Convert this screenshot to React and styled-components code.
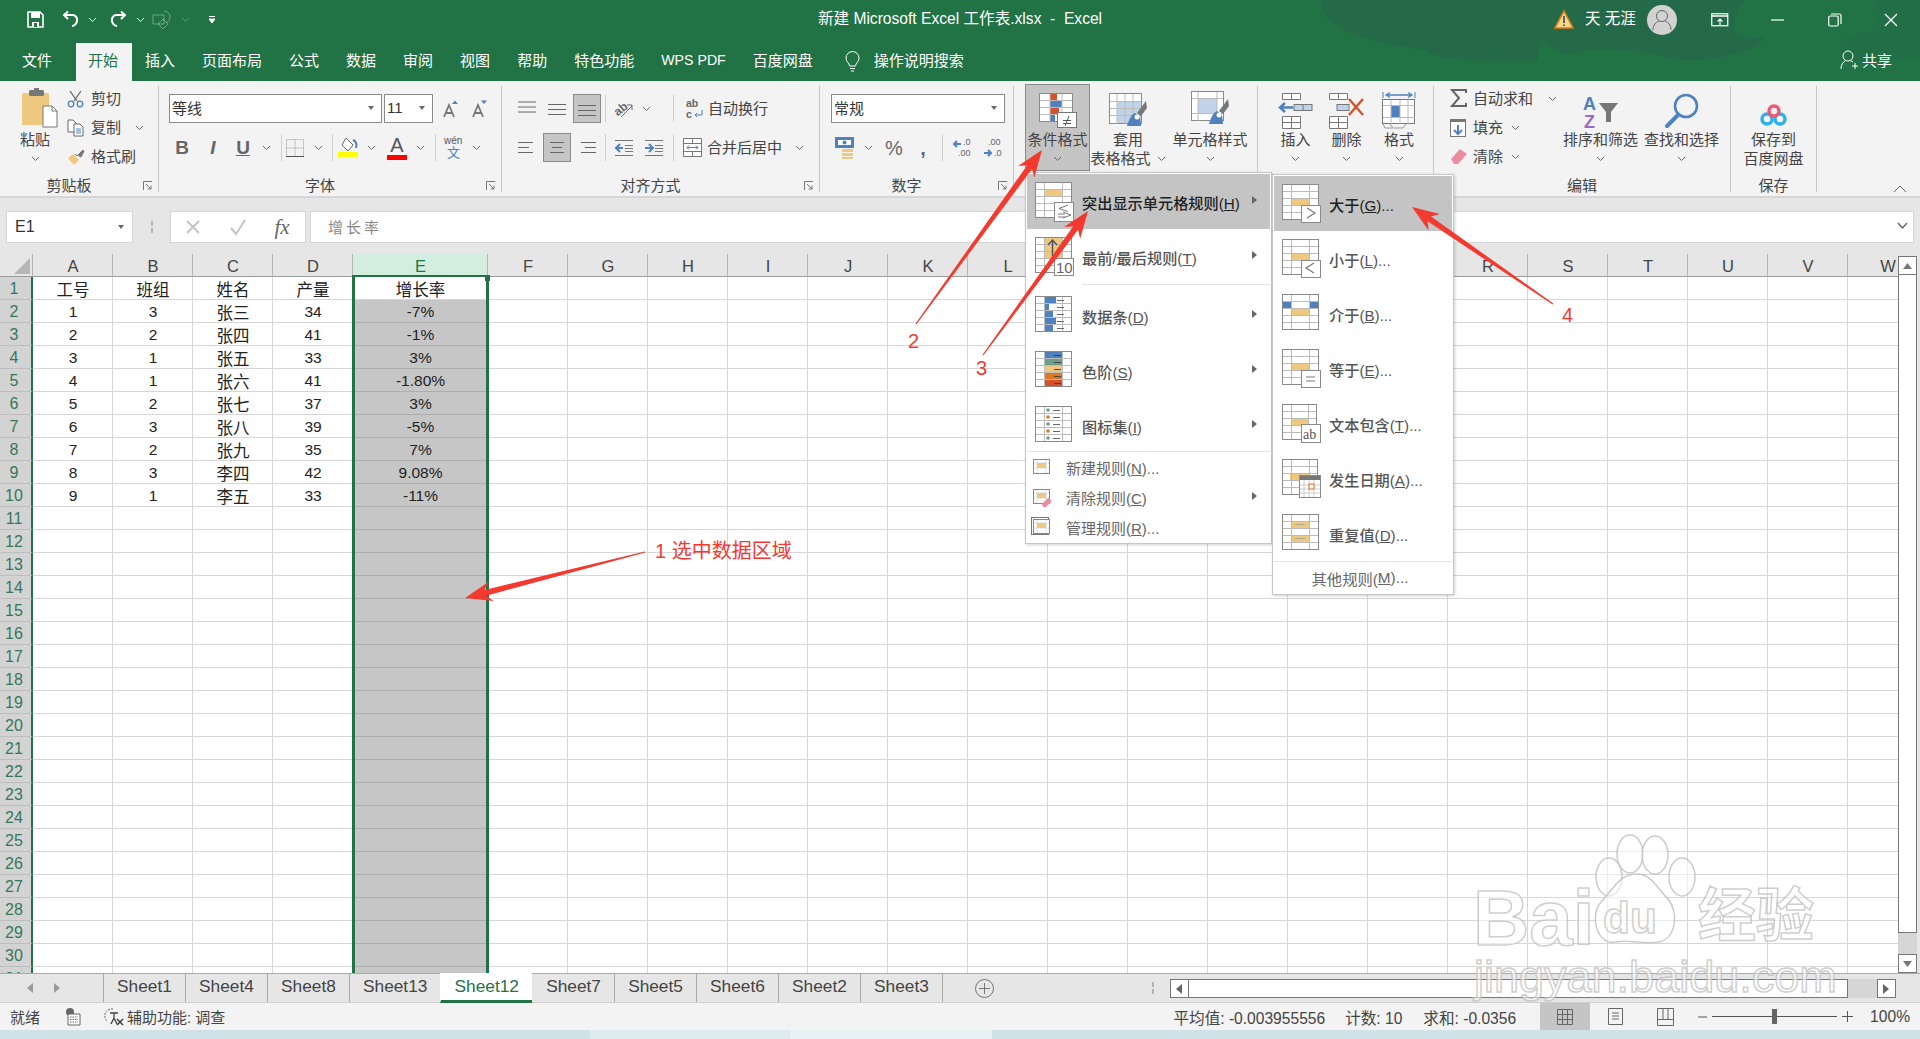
import React from "react";
import styled, { createGlobalStyle } from "styled-components";

const FONT = `"Liberation Sans", "Noto Sans CJK SC", sans-serif`;
const GREEN = "#217346";
const BLUE = "#4e81bd";
const GOLD = "#edc87e";

const GlobalStyle = createGlobalStyle`
  html, body { margin: 0; padding: 0; background: #fff; overflow: hidden; }
  * { box-sizing: border-box; }
  svg { overflow: visible; }
`;

const Page = styled.div`
  position: relative;
  width: 1920px;
  height: 1039px;
  display: flex;
  flex-direction: column;
  overflow: hidden;
  font-family: ${FONT};
  color: #444;
  font-size: 15px;
`;

/* ---------- title + tabs ---------- */
const Header = styled.header`
  position: relative;
  height: 81px;
  flex: none;
  background: ${GREEN};
  color: #fff;
`;
const Blobs = styled.svg`
  position: absolute;
  inset: 0;
`;
const TitleBar = styled.div`
  position: relative;
  height: 43px;
  display: grid;
  grid-template-columns: 1fr auto 1fr;
  align-items: center;
  padding-bottom: 4px;
`;
const Row = styled.div`
  display: flex;
  align-items: center;
  height: ${(p) => p.$h || 29}px;
  padding-left: ${(p) => p.$pl || 0}px;
  justify-content: ${(p) => p.$end ? "flex-end" : "flex-start"};
`;
const Title = styled.div`
  font-size: 15.6px;
  white-space: pre;
  margin-bottom: 5px;
`;
const Cell = styled.span`
  display: flex;
  align-items: center;
  justify-content: center;
  flex: none;
  width: ${(p) => p.$w}px;
  margin-left: ${(p) => p.$ml || 0}px;
`;
const Avatar = styled.span`
  display: flex;
  align-items: center;
  justify-content: center;
  width: 30px;
  height: 30px;
  margin-left: 13px;
  border-radius: 50%;
  background: #d2d2d2;
  flex: none;
`;
const UserName = styled.span`
  margin-left: 11px;
  margin-bottom: 5px;
  width: 49px;
  font-size: 15.5px;
  white-space: pre;
`;
const Tabs = styled.nav`
  position: relative;
  height: 38px;
  display: flex;
  align-items: stretch;
  padding-left: 8.5px;
`;
const Tab = styled.div`
  display: flex;
  align-items: center;
  padding: 0 13.5px 5px;
  margin-right: ${(p) => p.$mr || 0}px;
  font-size: ${(p) => p.$size || 15}px;
  color: ${(p) => (p.$active ? GREEN : "#fff")};
  background: ${(p) => (p.$active ? "#f3f3f3" : "transparent")};
  ${(p) => p.$active && "padding-left: 12px;"}
`;
const Share = styled.div`
  margin-left: auto;
  padding: 0 28px 5px 0;
  display: flex;
  align-items: center;
  gap: 4px;
  font-size: 15px;
`;

/* ---------- ribbon ---------- */
const Ribbon = styled.section`
  height: 117px;
  flex: none;
  display: flex;
  padding-top: 5px;
  background: #f3f3f3;
  border-bottom: 2px solid #d6d6d6;
`;
const Group = styled.div`
  position: relative;
  flex: none;
  width: ${(p) => p.$w}px;
  height: 106px;
  border-right: 1px solid #c6c6c6;
`;
const GroupBody = styled.div`
  height: 91px;
  display: flex;
  padding-left: ${(p) => p.$pl || 0}px;
  gap: ${(p) => p.$gap || 0}px;
`;
const GroupLabel = styled.div`
  height: 15px;
  line-height: 18px;
  text-align: center;
  font-size: 15px;
  padding-right: ${(p) => (p.$launcher ? 20 : 0)}px;
`;
const Launcher = styled.svg`
  position: absolute;
  right: 5px;
  bottom: 1px;
`;
const Controls = styled.div`
  display: flex;
  flex-direction: column;
  gap: 10px;
  padding-top: 8px;
`;
const Small = styled.div`
  display: flex;
  flex-direction: column;
  width: ${(p) => p.$w}px;
  margin-top: -2px;
`;
const SmallRow = styled.div`
  height: 29px;
  display: flex;
  align-items: center;
  white-space: nowrap;
`;
const SmallLabel = styled.span`
  margin-left: ${(p) => p.$ml || 7}px;
  margin-right: ${(p) => p.$mr || 0}px;
  padding-bottom: 2px;
  font-size: 15px;
`;
const Big = styled.div`
  flex: none;
  width: ${(p) => p.$w}px;
  height: 87px;
  margin-top: -2px;
  padding-top: 8px;
  display: flex;
  flex-direction: column;
  align-items: center;
  font-size: 15px;
  line-height: 19px;
  white-space: nowrap;
  background: ${(p) => (p.$pressed ? "#c5c5c5" : "transparent")};
  outline: ${(p) => (p.$pressed ? "1px solid #8a8a8a" : "none")};
  outline-offset: -1px;
`;
const BigIcon = styled.div`
  height: 38px;
  flex: none;
  display: flex;
  align-items: flex-end;
  justify-content: center;
  padding-bottom: 1px;
`;
const BigLine = styled.div`
  height: 19px;
  display: flex;
  align-items: center;
  gap: 6px;
`;
const Select = styled.div`
  flex: none;
  width: ${(p) => p.$w}px;
  margin-left: ${(p) => p.$ml || 0}px;
  height: 29px;
  display: flex;
  align-items: center;
  justify-content: space-between;
  padding: 0 7px 2px 2px;
  background: #fff;
  border: 1px solid #8a8a8a;
  font-size: 15px;
  color: #333;
`;
const Caret = styled.i`
  width: 0;
  height: 0;
  border-left: 3.5px solid transparent;
  border-right: 3.5px solid transparent;
  border-top: 4px solid #666;
`;
const Sep = styled.span`
  flex: none;
  width: 1px;
  height: 27px;
  background: #cfcfcf;
  margin-left: ${(p) => p.$ml || 0}px;
`;
const Toggled = styled.span`
  flex: none;
  display: flex;
  align-items: center;
  justify-content: center;
  width: 28px;
  height: 29px;
  margin-left: 1px;
  background: #c5c5c5;
  border: 1px solid #8a8a8a;
`;
const Glyph = styled.span`
  font-family: ${(p) => (p.$serif ? `"Liberation Serif", serif` : `"Liberation Sans", sans-serif`)};
  font-size: ${(p) => p.$size || 19}px;
  font-weight: ${(p) => p.$weight || 400};
  font-style: ${(p) => (p.$italic ? "italic" : "normal")};
  text-decoration: ${(p) => (p.$under ? "underline" : "none")};
  color: #666;
  line-height: 1;
`;
const ColorLetter = styled.span`
  display: flex;
  flex-direction: column;
  align-items: center;
  font-size: 20px;
  line-height: 19px;
  font-weight: 400;
  color: #555;
  &::after {
    content: "";
    width: 20px;
    height: 5px;
    background: #ff0000;
  }
`;
const RibbonEnd = styled.div`
  flex: 1;
  display: flex;
  justify-content: flex-end;
  align-items: flex-end;
  padding: 0 13px 3px 0;
`;

/* ---------- formula bar ---------- */
const FormulaBar = styled.div`
  height: 56px;
  flex: none;
  background: #e6e6e6;
  padding: 13px 6px 11px 6px;
  display: flex;
  align-items: stretch;
`;
const NameBox = styled.div`
  width: 127px;
  background: #fff;
  border: 1px solid #d5d5d5;
  display: flex;
  align-items: center;
  justify-content: space-between;
  padding: 0 8px;
  font-size: 16px;
  color: #333;
`;
const Dots = styled.span`
  width: 37px;
  display: flex;
  flex-direction: column;
  align-items: center;
  justify-content: center;
  gap: 2px;
  &::before, &::after {
    content: "";
    width: 2px;
    height: 5px;
    background: #b5b5b5;
  }
`;
const FxBox = styled.div`
  width: 136px;
  background: #fff;
  border: 1px solid #d5d5d5;
  display: flex;
  align-items: center;
`;
const FormulaInput = styled.div`
  flex: 1;
  margin-left: 4px;
  background: #fff;
  border: 1px solid #d5d5d5;
  display: flex;
  align-items: center;
  justify-content: space-between;
  padding: 0 5px 2px 17px;
  color: #888;
  font-size: 15px;
  letter-spacing: 3px;
`;

/* ---------- sheet ---------- */
const GridArea = styled.div`
  height: 719px;
  flex: none;
  display: flex;
  background: #e6e6e6;
  padding-right: 3px;
`;
const Sheet = styled.div`
  position: relative;
  flex: 1;
  overflow: hidden;
  background: #fff;
`;
const Table = styled.div`
  display: grid;
  grid-template-columns: 33px repeat(4, 80px) 135px repeat(18, 80px);
  grid-auto-rows: 23px;
  width: 1928px;
`;
const Corner = styled.div`
  background: #e6e6e6;
  border-bottom: 1px solid #9c9c9c;
  border-right: 1px solid #b4b4b4;
  display: flex;
  align-items: flex-end;
  justify-content: flex-end;
  padding: 0 2px 2px 0;
`;
const ColHead = styled.div`
  display: flex;
  align-items: center;
  justify-content: center;
  padding: 3px 0 0 1px;
  font-size: 16.5px;
  background: ${(p) => (p.$sel ? "#d3eedf" : "#e6e6e6")};
  color: ${(p) => (p.$sel ? GREEN : "#444")};
  border-bottom: 1px solid #9c9c9c;
  border-right: 1px solid #b4b4b4;
`;
const RowHead = styled.div`
  display: flex;
  align-items: center;
  justify-content: center;
  padding: 2px 3px 0 0;
  font-size: 16px;
  background: #d3d3d3;
  color: #34785a;
  border-bottom: 1px solid #bdbdbd;
  border-right: 2px solid ${GREEN};
`;
const DataCell = styled.div`
  display: flex;
  align-items: center;
  justify-content: center;
  padding: 2px 0 0 1px;
  font-size: ${(p) => (p.$cjk ? 16.5 : 15.5)}px;
  color: #222;
  white-space: nowrap;
  background: ${(p) => (p.$sel ? "#c6c6c6" : "#fff")};
  border-bottom: 1px solid ${(p) => (p.$sel ? "#adadad" : "#d6d6d6")};
  border-right: 1px solid ${(p) => (p.$sel ? "#c6c6c6" : "#d6d6d6")};
`;
const Selection = styled.div`
  position: absolute;
  left: 352px;
  top: 21px;
  width: 137px;
  height: 710px;
  border: 2px solid ${GREEN};
  border-width: 2px 3px 0;
  pointer-events: none;
  &::after {
    content: "";
    position: absolute;
    right: -4px;
    top: -2px;
    width: 5px;
    height: 6px;
    background: ${GREEN};
  }
`;
const VScroll = styled.div`
  flex: none;
  width: 19px;
  display: flex;
  flex-direction: column;
  padding-top: 2px;
`;
const ScrollBtn = styled.div`
  flex: none;
  width: ${(p) => (p.$wide ? "19px" : "100%")};
  height: ${(p) => p.$h || 19}px;
  display: flex;
  align-items: center;
  justify-content: center;
  background: #fff;
  border: 1px solid #777;
`;
const Thumb = styled.div`
  flex: none;
  height: 658px;
  background: #fff;
  border: 1px solid #777;
  border-top: none;
`;
const Track = styled.div`
  flex: 1;
  background: #d6d6d6;
`;

/* ---------- sheet tabs ---------- */
const SheetBar = styled.div`
  height: 30px;
  flex: none;
  display: flex;
  background: #e6e6e6;
  border-top: 1px solid #aaa;
  border-bottom: 1px solid #d0d0d0;
  align-items: stretch;
`;
const NavArrows = styled.div`
  width: 103px;
  display: flex;
  align-items: center;
  padding-left: 27px;
  gap: 21px;
`;
const SheetTab = styled.div`
  flex: none;
  display: flex;
  align-items: center;
  justify-content: center;
  padding: 0 13.1px ${(p) => (p.$active ? 1 : 4)}px;
  margin: ${(p) => (p.$active ? "-1px 0 -1px" : "0")};
  font-size: 17.3px;
  color: ${(p) => (p.$active ? GREEN : "#444")};
  background: ${(p) => (p.$active ? "#fff" : "transparent")};
  border-left: 1px solid ${(p) => (p.$active || p.$noline ? "transparent" : "#a8a8a8")};
  border-bottom: ${(p) => (p.$active ? `3px solid ${GREEN}` : "none")};
`;
const TabsEnd = styled.span`
  flex: none;
  width: 1px;
  background: #a8a8a8;
`;
const AddSheet = styled.div`
  width: 19px;
  height: 19px;
  margin: 5px 0 0 32px;
  border: 1px solid #777;
  border-radius: 50%;
  display: flex;
  align-items: center;
  justify-content: center;
  flex: none;
`;
const HScroll = styled.div`
  margin: 5px 0 0 0;
  height: 19px;
  width: 726px;
  display: flex;
  background: #d6d6d6;
  flex: none;
`;
const HThumb = styled.div`
  width: 659px;
  background: #fff;
  border: 1px solid #777;
  border-left: none;
`;
const HGap = styled.div`
  flex: 1;
`;
const BarDots = styled(Dots)`
  width: 20px;
  margin-left: 149px;
  margin-right: 7px;
`;

/* ---------- status ---------- */
const StatusBar = styled.footer`
  height: 27px;
  flex: none;
  display: flex;
  align-items: center;
  background: #f3f3f3;
  font-size: 15px;
  color: #444;
  padding: 0 10px;
  white-space: nowrap;
`;
const Stat = styled.span`
  margin-left: ${(p) => p.$ml}px;
`;
const Figure = styled(Stat)`
  font-size: 15.6px;
`;
const StatusGap = styled.span`
  flex: 1;
`;
const ViewBtn = styled.div`
  flex: none;
  width: ${(p) => p.$w}px;
  height: 27px;
  display: flex;
  align-items: center;
  justify-content: center;
  background: ${(p) => (p.$on ? "#c5c5c5" : "transparent")};
`;
const Zoom = styled.div`
  position: relative;
  width: 125px;
  height: 1px;
  margin-left: 5px;
  background: #555;
  flex: none;
  &::after {
    content: "";
    position: absolute;
    left: 60px;
    top: -7px;
    width: 5px;
    height: 15px;
    background: #666;
  }
`;
const Strip = styled.div`
  flex: 1;
  display: flex;
`;
const StripPart = styled.div`
  width: ${(p) => p.$w}px;
  flex: ${(p) => (p.$w ? "none" : 1)};
  background: ${(p) => p.$c};
`;

/* ---------- menu ---------- */
const Menu = styled.div`
  position: absolute;
  left: ${(p) => p.$x}px;
  top: ${(p) => p.$y}px;
  width: ${(p) => p.$w}px;
  background: #fff;
  border: 1px solid #c6c6c6;
  box-shadow: 1px 1px 3px rgba(0, 0, 0, 0.18);
  padding: 1px;
`;
const MenuItem = styled.div`
  height: 55px;
  display: flex;
  align-items: center;
  padding-left: 8px;
  padding-right: 13px;
  font-size: 15.2px;
  font-weight: 500;
  color: ${(p) => (p.$hi ? "#222" : "#555")};
  background: ${(p) => (p.$hi ? "#c4c4c4" : "transparent")};
  white-space: nowrap;
`;
const MenuIconSlot = styled.span`
  width: 47px;
  flex: none;
  display: flex;
`;
const MenuText = styled.span`
  flex: 1;
`;
const MenuSep = styled.div`
  height: 1px;
  margin: ${(p) => p.$m || "0"};
  background: #e2e2e2;
`;
const CompactItem = styled.div`
  height: 30px;
  display: flex;
  align-items: center;
  padding: 0 13px 0 4px;
  font-size: 15px;
  color: #666;
  white-space: nowrap;
`;
const CompactSlot = styled.span`
  width: 35px;
  flex: none;
  display: flex;
`;
const CenterItem = styled.div`
  height: 31px;
  display: flex;
  align-items: center;
  justify-content: center;
  font-size: 15.3px;
  color: #666;
  padding-right: 6px;
`;
const SubCaret = styled.i`
  flex: none;
  width: 0;
  height: 0;
  margin-bottom: 3px;
  border-top: 4px solid transparent;
  border-bottom: 4px solid transparent;
  border-left: 5px solid #666;
`;

/* ---------- overlays ---------- */
const Arrows = styled.svg`
  position: absolute;
  inset: 0;
  pointer-events: none;
`;
const Note = styled.span`
  position: absolute;
  left: ${(p) => p.$x}px;
  top: ${(p) => p.$y}px;
  font-size: 20px;
  line-height: 22px;
  color: #f33a30;
  white-space: nowrap;
`;
const Watermark = styled.div`
  position: absolute;
  left: 1470px;
  top: 832px;
  width: 350px;
  height: 175px;
  pointer-events: none;
`;
const MarkText = styled.span`
  position: absolute;
  left: ${(p) => p.$x}px;
  top: ${(p) => p.$y}px;
  font-family: ${FONT};
  font-size: ${(p) => p.$size}px;
  font-weight: ${(p) => p.$weight || 700};
  line-height: 1;
  white-space: nowrap;
  color: rgba(255, 255, 255, 0.55);
  -webkit-text-stroke: 1.5px rgba(190, 190, 190, 0.75);
`;

/* ---------- icons ---------- */
const Chev = ({ c = "#666" }) => (
  <svg width="9" height="6" viewBox="0 0 9 6"><path d="M1 1l3.5 3.5L8 1" fill="none" stroke={c} /></svg>
);
const LauncherIcon = () => (
  <Launcher width="10" height="10" viewBox="0 0 10 10">
    <path d="M.5 9V.5H9M3 3l5 5M8 4.5V8H4.5" fill="none" stroke="#777" />
  </Launcher>
);

function GridIcon({ w = 36, h = 35, xs = [9, 27], ys = [7, 14, 21, 28], fills = [], size = 40, children }) {
  return (
    <svg width={size} height={size} viewBox={`0 0 ${size} ${size}`}>
      <rect x=".5" y=".5" width={w} height={h} fill="#fff" stroke="#8a8a8a" />
      {fills.map((f, i) => <rect key={i} x={f[0]} y={f[1]} width={f[2]} height={f[3]} fill={f[4]} />)}
      {xs.map((x) => <path key={x} d={`M${x}.5 1v${h - 1}`} stroke="#bbb" />)}
      {ys.map((y) => <path key={y} d={`M1 ${y}.5h${w - 1}`} stroke="#bbb" />)}
      {children}
    </svg>
  );
}
const Tag = ({ x = 19, y = 21, w = 19, h = 17, children }) => (
  <g>
    <rect x={x + 0.5} y={y + 0.5} width={w} height={h} fill="#fff" stroke="#8a8a8a" />
    {children}
  </g>
);
const ticks = (x, ys, c = "#666") => ys.map((y) => <path key={y} d={`M${x} ${y}.5h7`} stroke={c} />);

const menuIcons = [
  <GridIcon fills={[[9, 7, 18, 7, GOLD]]}>
    <Tag y={20} h={19}><path d="M33 23l-9 3.500 9 3M23 32h7M23 35h7M28 30l8 3-8 3" fill="none" stroke="#777" /></Tag>
  </GridIcon>,
  <GridIcon fills={[[9, 1, 18, 20, GOLD]]}>
    <path d="M17.500 19V3M13 8l4.500-5 4.500 5" fill="none" stroke="#555" strokeWidth="1.500" />
    <Tag y={21} h={17}><text x="21" y="36" fontSize="15" fill="#666" fontFamily="Liberation Sans">10</text></Tag>
  </GridIcon>,
  <GridIcon fills={[[9, 1, 12, 6, BLUE], [9, 8, 5, 6, BLUE], [9, 15, 9, 6, BLUE], [9, 22, 12, 6, BLUE], [9, 29, 9, 6, BLUE]]}>
    {ticks(22, [4, 11, 18, 25, 32])}
  </GridIcon>,
  <GridIcon fills={[[9, 1, 18, 6, BLUE], [9, 8, 18, 6, "#69a08a"], [9, 15, 18, 6, GOLD], [9, 22, 18, 6, "#e2761c"], [9, 29, 18, 6, "#d2522c"]]}>
    {ticks(19, [4, 11, 18, 25, 32], "#444")}
  </GridIcon>,
  <GridIcon>
    {[["#69a08a", 4], ["#e2761c", 11], ["#69a08a", 18], ["#e2761c", 25], ["#69a08a", 32]].map(([c, y]) => (
      <circle key={y} cx="13" cy={y} r="1.800" fill={c} />
    ))}
    {ticks(18, [4, 11, 18, 25, 32])}
  </GridIcon>,
];
const subGold = [[9, 14, 18, 7, GOLD]];
const subIcons = [
  <GridIcon fills={subGold}><Tag y={21}><path d="M25 24l8 5-8 5" fill="none" stroke="#777" strokeWidth="1.200" /></Tag></GridIcon>,
  <GridIcon fills={subGold}><Tag y={21}><path d="M32 24l-8 5 8 5" fill="none" stroke="#777" strokeWidth="1.200" /></Tag></GridIcon>,
  <GridIcon fills={[[1, 7, 8, 7, BLUE], [27, 7, 9, 7, BLUE], ...subGold]} />,
  <GridIcon fills={subGold}><Tag y={21}><path d="M24 28h9M24 32h9" stroke="#777" /></Tag></GridIcon>,
  <GridIcon w={34} xs={[9, 26]} fills={subGold}><Tag y={20} h={18}><text x="21" y="35" fontSize="14" fill="#555" fontFamily="Liberation Serif">ab</text></Tag></GridIcon>,
  <GridIcon w={35} fills={[[8, 14, 20, 7, GOLD]]}>
    <Tag x={17} y={16} w={21} h={22}>
      <rect x="18" y="17" width="20" height="4" fill="#777" />
      <path d="M18 26h20M18 30h20M18 34h20M22 21v17M27 21v17M32 21v17" stroke="#ccc" />
      <rect x="27" y="25" width="5" height="5" fill="#fff" stroke="#e2761c" />
    </Tag>
  </GridIcon>,
  <GridIcon fills={[[9, 7, 18, 7, GOLD], [9, 21, 18, 7, GOLD]]}>
    <path d="M13 10.500h10M13 24.500h10" stroke="#aa9" />
  </GridIcon>,
];
const MiniGrid = ({ extra, double }) => (
  <svg width="22" height="22" viewBox="0 0 22 22">
    {double && <rect x=".5" y="1.500" width="17" height="17" fill="none" stroke="#777" />}
    <rect x="2.500" y="3.500" width="16" height="14" fill="#fff" stroke="#888" />
    <rect x="6" y="7" width="9" height="5" fill={GOLD} />
    <path d="M3 7h15M3 12h15M6 4v13M15 4v13" stroke="#ccc" strokeDasharray="1 1" />
    {extra}
  </svg>
);

const Scissors = () => (
  <svg width="17" height="18" viewBox="0 0 17 18">
    <path d="M3 1l7 10M14 1L7 11" stroke="#666" strokeWidth="1.300" fill="none" />
    <circle cx="4" cy="14" r="2.800" fill="none" stroke={BLUE} strokeWidth="1.300" />
    <circle cx="13" cy="14" r="2.800" fill="none" stroke={BLUE} strokeWidth="1.300" />
  </svg>
);
const CopyIcon = () => (
  <svg width="17" height="18" viewBox="0 0 17 18">
    <path d="M1 1h5l3 3v9H1z" fill="#fff" stroke="#666" />
    <path d="M7 5h6l3 3v9H7z" fill="#fff" stroke="#666" />
    <path d="M9 10h5M9 12h5M9 14h5" stroke={BLUE} />
  </svg>
);
const BrushIcon = () => (
  <svg width="18" height="16" viewBox="0 0 18 16">
    <path d="M1 9l5-4 6 6-5 5z" fill={GOLD} />
    <path d="M8 5l2 2 6-6 1 1-3 6 -2-1" fill="#777" stroke="#777" />
  </svg>
);
const PasteIcon = () => (
  <svg width="46" height="41" viewBox="0 0 46 41">
    <path d="M12 5h7l2-3h6l2 3h6a2 2 0 0 1 2 2v30H10V7a2 2 0 0 1 2-2z" fill={GOLD} />
    <rect x="17" y="2" width="15" height="6" rx="1.500" fill="#777" />
    <rect x="22" y="0" width="5" height="4" fill="#777" />
    <path d="M31 18h9l5 5v16H31z" fill="#fff" stroke="#777" />
    <path d="M40 18v5h5" fill="none" stroke="#777" />
  </svg>
);
const GrowA = ({ up }) => (
  <svg width="16" height="18" viewBox="0 0 16 18">
    <path d="M1 17L6 5l5 12M3 13h6" fill="none" stroke="#777" strokeWidth="1.800" />
    <path d={up ? "M9 4l3-3.500L15 4z" : "M9 .5h6L12 4z"} fill={BLUE} />
  </svg>
);
const BorderIcon = () => (
  <svg width="18" height="18" viewBox="0 0 18 18">
    <path d="M.5.500h17v17H.5zM9 .5v17M.5 9h17" fill="none" stroke="#999" strokeDasharray="1 1" />
    <path d="M0 17.500h18" stroke="#555" />
  </svg>
);
const FillIcon = () => (
  <svg width="21" height="21" viewBox="0 0 21 21">
    <path d="M8 1l7 7-5 6-6-6z" fill="#fff" stroke="#666" />
    <path d="M15 3c3 1 4 4 3 8" fill="none" stroke={BLUE} strokeWidth="2" />
    <rect y="15" width="20" height="5" fill="#ffff00" />
  </svg>
);
const WenIcon = () => (
  <svg width="20" height="26" viewBox="0 0 20 26">
    <text x="0" y="9" fontSize="10" fill="#555" fontFamily="Liberation Sans">wén</text>
    <text x="3" y="22" fontSize="13" fill={BLUE} fontFamily="Noto Sans CJK SC">文</text>
  </svg>
);
const Lines = ({ dy = 0, x = [0, 0, 0], w = [18, 18, 18], c = "#666" }) => (
  <svg width="18" height="14" viewBox="0 0 18 14">
    {[0, 1, 2].map((i) => <path key={i} d={`M${x[i]} ${i * 5 + 1.5 + dy}h${w[i]}`} stroke={c} />)}
  </svg>
);
const Orient = () => (
  <svg width="20" height="20" viewBox="0 0 20 20">
    <text x="0" y="13" fontSize="12" fontWeight="700" fill="#666" transform="rotate(-40 8 10)" fontFamily="Liberation Sans">ab</text>
    <path d="M7 18L18 7M13 6h5v5" fill="none" stroke="#666" />
  </svg>
);
const Indent = ({ flip }) => (
  <svg width="18" height="18" viewBox="0 0 18 18">
    {flip ? <path d="M0 9h7M4 5l4 4-4 4" fill="none" stroke={BLUE} strokeWidth="2" /> : <path d="M8 9H1M5 5L1 9l4 4" fill="none" stroke={BLUE} strokeWidth="2" />}
    <path d="M0 1.500h18M0 16.500h18M10 6.500h8M10 9.500h8M10 12.500h8" stroke="#777" />
  </svg>
);
const WrapIcon = () => (
  <svg width="17" height="22" viewBox="0 0 17 22">
    <text x="0" y="9" fontSize="10.500" fill="#666" fontFamily="Liberation Sans" fontWeight="700">ab</text>
    <text x="0" y="20" fontSize="10.500" fill="#666" fontFamily="Liberation Sans" fontWeight="700">c</text>
    <path d="M16 12v5H9M11 15l-2 2 2 2" fill="none" stroke={BLUE} />
  </svg>
);
const MergeIcon = () => (
  <svg width="19" height="19" viewBox="0 0 19 19">
    <path d="M.5.500h18v18H.5zM1 5.500h17M1 13.500h17M9.500 1v4M9.500 14v4" fill="#fff" stroke="#777" />
    <path d="M4 9.500h11M6 7.500l-2 2 2 2M13 7.500l2 2-2 2" fill="none" stroke={BLUE} />
  </svg>
);
const Currency = () => (
  <svg width="20" height="22" viewBox="0 0 20 22">
    <rect x="0" y="0" width="19" height="11" fill={BLUE} />
    <rect x="3" y="3" width="13" height="5" fill="#fff" />
    <circle cx="9.500" cy="5.500" r="2" fill={BLUE} />
    <rect x="7" y="12" width="11" height="3" fill={GOLD} />
    <rect x="7" y="16" width="11" height="3" fill={GOLD} />
    <rect x="7" y="20" width="11" height="2" fill={GOLD} />
  </svg>
);
const DecIcon = ({ more }) => (
  <svg width="19" height="20" viewBox="0 0 19 20">
    <path d={more ? "M1 15h7M5 12l3 3-3 3" : "M8 6H1M4 3L1 6l3 3"} fill="none" stroke={BLUE} strokeWidth="2" />
    <text x={more ? 5 : 10} y="7" fontSize="9" fill="#666" fontFamily="Liberation Sans">{more ? ".00" : ".0"}</text>
    <text x={more ? 11 : 5} y="18" fontSize="9" fill="#666" fontFamily="Liberation Sans">{more ? ".0" : ".00"}</text>
  </svg>
);
const CondIcon = () => (
  <svg width="38" height="36" viewBox="0 0 38 36">
    <rect x=".5" y=".5" width="33" height="28" fill="#fff" stroke="#8a8a8a" />
    <rect x="11" y="1" width="7" height="6" fill="#d2522c" />
    <rect x="11" y="8" width="12" height="6" fill={BLUE} />
    <rect x="11" y="15" width="9" height="6" fill="#d2522c" />
    <rect x="11" y="22" width="5" height="6" fill={BLUE} />
    <path d="M11 1v28M23 1v28M1 7.500h32M1 14.500h32M1 21.500h32" stroke="#bbb" />
    <rect x="18.500" y="19.500" width="19" height="15" fill="#fff" stroke="#777" />
    <path d="M24 27.500h8M24 30.500h8M30 23l-4 10" stroke="#555" fill="none" />
  </svg>
);
const Pen = () => (
  <g>
    <path d="M37 8l-9 12 4 3 6-8z" fill="#777" />
    <path d="M26 20c-3 1-6 6-8 13h14c0-4-1-8-1-9z" fill={BLUE} />
    <circle cx="28" cy="24" r="2.500" fill="#fff" />
  </g>
);
const TableStyleIcon = () => (
  <svg width="38" height="36" viewBox="0 0 38 36">
    <rect x=".5" y=".5" width="32" height="30" fill="#fff" stroke="#8a8a8a" />
    <rect x="8" y="8" width="24" height="22" fill="#c0d3e8" />
    <path d="M8 1v30M16 1v30M24 1v30M1 8.500h31M1 15.500h31M1 22.500h31" stroke="#bbb" />
    <Pen />
  </svg>
);
const CellStyleIcon = () => (
  <svg width="38" height="38" viewBox="0 0 38 38">
    <rect x=".5" y=".5" width="32" height="29" fill="#fff" stroke="#8a8a8a" />
    <rect x="7" y="7" width="19" height="15" fill="#c0d3e8" />
    <path d="M7 1v29M26 1v29M1 7.500h31M1 22.500h31" stroke="#bbb" />
    <Pen />
  </svg>
);
const InsertIcon = () => (
  <svg width="34" height="36" viewBox="0 0 34 36">
    <path d="M3.500.5h18v6h-18zM12.500 1v6M3.500 23.500h18v12h-18zM3.500 29.500h18M12.500 24v12" fill="#fff" stroke="#777" />
    <rect x="15" y="11.500" width="18" height="6" fill="#c0d3e8" stroke="#777" />
    <path d="M24 12v6" stroke="#777" />
    <path d="M14 14.500H2M6 10l-5 4.500L6 19" fill="none" stroke={BLUE} strokeWidth="2.400" />
  </svg>
);
const DeleteIcon = () => (
  <svg width="36" height="36" viewBox="0 0 36 36">
    <path d="M.5.500h18v6H.5zM9.500 1v6M.5 23.500h18v12H.5zM.5 29.500h18M9.500 24v12" fill="#fff" stroke="#777" />
    <rect x="8" y="11.500" width="12" height="6" fill="#c0d3e8" stroke="#777" />
    <path d="M20 6l14 16M34 6L20 22" stroke="#d2522c" strokeWidth="2.400" />
  </svg>
);
const FormatIcon = () => (
  <svg width="34" height="38" viewBox="0 0 34 38">
    <path d="M1 1v6M33 1v6" stroke={BLUE} />
    <path d="M4 4h26M8 1.500L4 4l4 2.500M26 1.500L30 4l-4 2.500" fill="none" stroke={BLUE} strokeWidth="1.300" />
    <rect x=".5" y="8.500" width="32" height="24" fill="#fff" stroke="#777" />
    <rect x="9" y="14" width="9" height="12" fill={BLUE} />
    <path d="M9 9v24M18 9v24M26 9v24M1 14.500h32M1 26.500h32" stroke="#bbb" />
    <path d="M1 33l2 4h8l-3-4M12 37l9 0 3-4" fill="none" stroke="#999" />
  </svg>
);
const Sigma = () => (
  <svg width="17" height="19" viewBox="0 0 17 19"><path d="M16 4V1H2l7 8-7 8h14v-3" fill="none" stroke="#666" strokeWidth="2" /></svg>
);
const FillDown = () => (
  <svg width="17" height="18" viewBox="0 0 17 18">
    <rect x=".5" y=".5" width="15" height="17" fill="#fff" stroke="#777" />
    <rect width="16" height="3" fill="#777" />
    <path d="M8 6v9M4 11l4 4 4-4" fill="none" stroke={BLUE} strokeWidth="2" />
  </svg>
);
const Eraser = () => (
  <svg width="18" height="17" viewBox="0 0 18 17"><path d="M1 11l9-10 7 5-9 10H4z" fill="#ea8d9c" /></svg>
);
const SortIcon = () => (
  <svg width="36" height="34" viewBox="0 0 36 34">
    <text x="0" y="15" fontSize="18" fontWeight="700" fill={BLUE} fontFamily="Liberation Sans">A</text>
    <text x="1" y="33" fontSize="18" fontWeight="700" fill="#9a6cbd" fontFamily="Liberation Sans">Z</text>
    <path d="M16 8h19l-7 9v10h-5V17z" fill="#777" />
  </svg>
);
const FindIcon = () => (
  <svg width="36" height="36" viewBox="0 0 36 36">
    <circle cx="22" cy="13" r="11" fill="none" stroke={BLUE} strokeWidth="2.600" />
    <path d="M14 22L3 33" stroke={BLUE} strokeWidth="4" strokeLinecap="round" />
  </svg>
);
const CloudIcon = () => (
  <svg width="28" height="26" viewBox="0 0 28 26">
    <circle cx="7" cy="16" r="5" fill="none" stroke="#2fb0ee" strokeWidth="3.500" />
    <circle cx="20" cy="16" r="5" fill="none" stroke="#2fb0ee" strokeWidth="3.500" />
    <circle cx="14" cy="8" r="5" fill="none" stroke="#ee5a74" strokeWidth="3.500" />
  </svg>
);
const BlockArrow = ({ points }) => (
  <svg width="6" height="10" viewBox="0 0 6 10"><polygon points={points} fill="#999" /></svg>
);

/* red pointers drawn on top of the shot: thin tail widening into a barbed head */
function arrowPoints([x0, y0], [x1, y1]) {
  const len = Math.hypot(x1 - x0, y1 - y0);
  const ux = (x1 - x0) / len;
  const uy = (y1 - y0) / len;
  const at = (along, side) => `${x0 + ux * along - uy * side},${y0 + uy * along + ux * side}`;
  return [
    at(0, -0.6), at(len - 21, -3), at(len - 27, -10), at(len, 0),
    at(len - 27, 10), at(len - 21, 3), at(0, 0.6),
  ].join(" ");
}
const pointers = [
  [[645, 552], [465, 598]],
  [[916, 324], [1042, 150]],
  [[983, 355], [1088, 211]],
  [[1553, 304], [1412, 207]],
];

const topTabs = ["插入", "页面布局", "公式", "数据", "审阅", "视图", "帮助", "特色功能"];
const colNames = "ABCDEFGHIJKLMNOPQRSTUVW".split("");
const rowsData = [
  ["工号", "班组", "姓名", "产量", "增长率"],
  [1, 3, "张三", 34, "-7%"],
  [2, 2, "张四", 41, "-1%"],
  [3, 1, "张五", 33, "3%"],
  [4, 1, "张六", 41, "-1.80%"],
  [5, 2, "张七", 37, "3%"],
  [6, 3, "张八", 39, "-5%"],
  [7, 2, "张九", 35, "7%"],
  [8, 3, "李四", 42, "9.08%"],
  [9, 1, "李五", 33, "-11%"],
];
const sheets = ["Sheet1", "Sheet4", "Sheet8", "Sheet13", "Sheet12", "Sheet7", "Sheet5", "Sheet6", "Sheet2", "Sheet3"];
const mainItems = [
  ["突出显示单元格规则(", "H", ")"],
  ["最前/最后规则(", "T", ")"],
  ["数据条(", "D", ")"],
  ["色阶(", "S", ")"],
  ["图标集(", "I", ")"],
];
const subItems = [
  ["大于(", "G", ")..."],
  ["小于(", "L", ")..."],
  ["介于(", "B", ")..."],
  ["等于(", "E", ")..."],
  ["文本包含(", "T", ")..."],
  ["发生日期(", "A", ")..."],
  ["重复值(", "D", ")..."],
];

const Hot = ({ parts }) => <>{parts[0]}<u>{parts[1]}</u>{parts[2]}</>;

function BigButton({ w, icon, label, pressed }) {
  return (
    <Big $w={w} $pressed={pressed}>
      <BigIcon>{icon}</BigIcon>
      <BigLine>{label}</BigLine>
      <BigLine><Chev /></BigLine>
    </Big>
  );
}

export default function App() {
  return (
    <Page>
      <GlobalStyle />
      <Header>
        <Blobs width="1920" height="81" viewBox="0 0 1920 81">
          <path
            d="M1322 0c-4 26 40 42 103 50 15 12 75 12 113 10l2-20 26 15c34-10 74-5 114 5 40 2 80-10 85-24-25 6-45-1-20-36z"
            fill="#256a48"
          />
          <path d="M1842 60c-8-20 10-30 30-28 10-16 10-22 0-32h48v60z" fill="#256a48" opacity=".55" />
        </Blobs>
        <TitleBar>
          <Row $h={32} $pl={27}>
            <Cell $w={16}>
              <svg width="17" height="17" viewBox="0 0 17 17">
                <path d="M1 1h12l3 3v12H1z" fill="none" stroke="#fff" strokeWidth="1.600" />
                <path d="M4 1h9v6H4zM5 11h7v5H5z" fill="#fff" />
                <rect x="7" y="12" width="3" height="4" fill={GREEN} />
              </svg>
            </Cell>
            <Cell $w={18} $ml={19}>
              <svg width="18" height="17" viewBox="0 0 18 17">
                <path d="M2 4h9a5 5 0 0 1 4 6c-.500 3-3 5-5 5M6 .5L2 4l4 4" fill="none" stroke="#fff" strokeWidth="2" />
              </svg>
            </Cell>
            <Cell $w={9} $ml={8}><Chev c="#fff" /></Cell>
            <Cell $w={18} $ml={12}>
              <svg width="18" height="17" viewBox="0 0 18 17">
                <path d="M16 4H7a5 5 0 0 0-4 6c.500 3 3 5 5 5M12 .5L16 4l-4 4" fill="none" stroke="#fff" strokeWidth="2" />
              </svg>
            </Cell>
            <Cell $w={9} $ml={9}><Chev c="#fff" /></Cell>
            <Cell $w={21} $ml={7}>
              <svg width="21" height="21" viewBox="0 0 21 21" opacity=".35">
                <path d="M1 6h11v9H1zM12 2a6 6 0 0 1 6 6c0 3-2 5-4 6M11 10l5 5-5 5-5-5z" fill="none" stroke="#fff" />
              </svg>
            </Cell>
            <Cell $w={9} $ml={8}><Chev c="#5d9a7a" /></Cell>
            <Cell $w={8} $ml={18}>
              <svg width="8" height="8" viewBox="0 0 8 8"><path d="M1 .5h6M1 3h6L4 7z" fill="#fff" stroke="#fff" /></svg>
            </Cell>
          </Row>
          <Title>新建 Microsoft Excel 工作表.xlsx  -  Excel</Title>
          <Row $h={32} $end>
            <Cell $w={20}>
              <svg width="20" height="19" viewBox="0 0 20 19">
                <path d="M10 1l9 17H1z" fill="#f5d98a" stroke="#e2761c" strokeWidth="1.600" />
                <path d="M10 6v7M10 14.500v1.500" stroke="#444" strokeWidth="1.600" />
              </svg>
            </Cell>
            <UserName>天 无涯</UserName>
            <Avatar>
              <svg width="20" height="22" viewBox="0 0 20 22">
                <circle cx="10" cy="7" r="5.500" fill="none" stroke="#666" />
                <path d="M1 21c0-5 3-8 6-9M19 21c0-5-3-8-6-9" fill="none" stroke="#666" />
              </svg>
            </Avatar>
            <Cell $w={18} $ml={34}>
              <svg width="18" height="14" viewBox="0 0 18 14">
                <rect x=".75" y=".75" width="16" height="12" fill="none" stroke="#fff" strokeWidth="1.200" />
                <path d="M1 3h16" stroke="#fff" strokeWidth="1.500" />
                <path d="M9 12V6M6.500 8.500L9 6l2.500 2.500" fill="none" stroke="#fff" strokeWidth="1.200" />
              </svg>
            </Cell>
            <Cell $w={12} $ml={42}>
              <svg width="13" height="2" viewBox="0 0 13 2"><path d="M0 1h13" stroke="#fff" strokeWidth="1.200" /></svg>
            </Cell>
            <Cell $w={14} $ml={45}>
              <svg width="14" height="14" viewBox="0 0 14 14">
                <rect x=".7" y="3" width="9.500" height="10" rx="1.500" fill="none" stroke="#fff" strokeWidth="1.200" />
                <path d="M3 1h8a2 2 0 0 1 2 2v8" fill="none" stroke="#fff" strokeWidth="1.200" />
              </svg>
            </Cell>
            <Cell $w={14} $ml={42}>
              <svg width="14" height="14" viewBox="0 0 14 14"><path d="M1 1l12 12M13 1L1 13" stroke="#fff" strokeWidth="1.300" /></svg>
            </Cell>
            <Cell $w={22} />
          </Row>
        </TitleBar>
        <Tabs>
          <Tab $mr={10.5}>文件</Tab>
          <Tab $active>开始</Tab>
          {topTabs.map((t) => <Tab key={t}>{t}</Tab>)}
          <Tab $size={14.2}>WPS PDF</Tab>
          <Tab>百度网盘</Tab>
          <Cell $w={15} $ml={19}>
            <svg width="15" height="22" viewBox="0 0 15 22">
              <path d="M4.500 15c0-3-3.500-4-3.500-8a6.500 6.500 0 0 1 13 0c0 4-3.500 5-3.500 8z" fill="none" stroke="#fff" />
              <path d="M5 17.500h5M6 20h3" stroke="#fff" />
            </svg>
          </Cell>
          <Tab>操作说明搜索</Tab>
          <Share>
            <svg width="18" height="19" viewBox="0 0 18 19">
              <circle cx="8" cy="6" r="5" fill="none" stroke="#fff" />
              <path d="M1 19c0-4 2-7 4-8M11 11l2 1M12 16h6M15 13v6" fill="none" stroke="#fff" />
            </svg>
            共享
          </Share>
        </Tabs>
      </Header>

      <Ribbon>
        <Group $w={159}>
          <GroupBody $pl={3}>
            <Big $w={64}>
              <BigIcon><PasteIcon /></BigIcon>
              <BigLine>粘贴</BigLine>
              <BigLine><Chev /></BigLine>
            </Big>
            <Small $w={85}>
              <SmallRow><Cell $w={17}><Scissors /></Cell><SmallLabel>剪切</SmallLabel></SmallRow>
              <SmallRow><Cell $w={17}><CopyIcon /></Cell><SmallLabel $mr={14}>复制</SmallLabel><Chev /></SmallRow>
              <SmallRow><Cell $w={17}><BrushIcon /></Cell><SmallLabel>格式刷</SmallLabel></SmallRow>
            </Small>
          </GroupBody>
          <GroupLabel $launcher>剪贴板</GroupLabel>
          <LauncherIcon />
        </Group>

        <Group $w={343}>
          <GroupBody $pl={10}>
            <Controls>
              <Row>
                <Select $w={213}>等线<Caret /></Select>
                <Select $w={49} $ml={2}>11<Caret /></Select>
                <Cell $w={16} $ml={10}><GrowA up /></Cell>
                <Cell $w={16} $ml={13}><GrowA /></Cell>
              </Row>
              <Row>
                <Cell $w={26}><Glyph $weight={700}>B</Glyph></Cell>
                <Cell $w={36}><Glyph $italic $weight={700}>I</Glyph></Cell>
                <Cell $w={24}><Glyph $weight={700} $under>U</Glyph></Cell>
                <Cell $w={22}><Chev /></Cell>
                <Sep $ml={4} />
                <Cell $w={25} $ml={0}><BorderIcon /></Cell>
                <Cell $w={22}><Chev /></Cell>
                <Sep $ml={3} />
                <Cell $w={30}><FillIcon /></Cell>
                <Cell $w={16}><Chev /></Cell>
                <Cell $w={36}><ColorLetter>A</ColorLetter></Cell>
                <Cell $w={10}><Chev /></Cell>
                <Sep $ml={10} />
                <Cell $w={36}><WenIcon /></Cell>
                <Cell $w={8}><Chev /></Cell>
              </Row>
            </Controls>
          </GroupBody>
          <GroupLabel $launcher>字体</GroupLabel>
          <LauncherIcon />
        </Group>

        <Group $w={318}>
          <GroupBody $pl={10}>
            <Controls>
              <Row>
                <Cell $w={30}><Lines dy={-1.5} /></Cell>
                <Cell $w={30}><Lines dy={1} /></Cell>
                <Toggled><Lines dy={2} /></Toggled>
                <Sep $ml={4} />
                <Cell $w={36}><Orient /></Cell>
                <Cell $w={8}><Chev /></Cell>
                <Sep $ml={23} />
                <Cell $w={17} $ml={12}><WrapIcon /></Cell>
                <SmallLabel $ml={5}>自动换行</SmallLabel>
              </Row>
              <Row>
                <Cell $w={30}><Lines w={[15, 11, 15]} /></Cell>
                <Toggled><Lines x={[2, 4, 2]} w={[14, 10, 14]} /></Toggled>
                <Cell $w={30} $ml={1}><Lines x={[3, 7, 3]} w={[15, 11, 15]} /></Cell>
                <Sep $ml={3} />
                <Cell $w={36}><Indent /></Cell>
                <Cell $w={24}><Indent flip /></Cell>
                <Sep $ml={7} />
                <Cell $w={19} $ml={9}><MergeIcon /></Cell>
                <SmallLabel $ml={5} $mr={13}>合并后居中</SmallLabel>
                <Chev />
              </Row>
            </Controls>
          </GroupBody>
          <GroupLabel $launcher>对齐方式</GroupLabel>
          <LauncherIcon />
        </Group>

        <Group $w={194}>
          <GroupBody $pl={11}>
            <Controls>
              <Row><Select $w={174}>常规<Caret /></Select></Row>
              <Row>
                <Cell $w={28}><Currency /></Cell>
                <Cell $w={18}><Chev /></Cell>
                <Cell $w={34}><Glyph $size={20}>%</Glyph></Cell>
                <Cell $w={24}><Glyph $size={20} $weight={700}>,</Glyph></Cell>
                <Sep $ml={7} />
                <Cell $w={39}><DecIcon /></Cell>
                <Cell $w={21}><DecIcon more /></Cell>
              </Row>
            </Controls>
          </GroupBody>
          <GroupLabel $launcher>数字</GroupLabel>
          <LauncherIcon />
        </Group>

        <Group $w={244}>
          <GroupBody $pl={11} $gap={1}>
            <BigButton w={65} pressed icon={<CondIcon />} label="条件格式" />
            <Big $w={74}>
              <BigIcon><TableStyleIcon /></BigIcon>
              <BigLine>套用</BigLine>
              <BigLine>表格格式<Chev /></BigLine>
            </Big>
            <BigButton w={88} icon={<CellStyleIcon />} label="单元格样式" />
          </GroupBody>
          <GroupLabel>样式</GroupLabel>
        </Group>

        <Group $w={176}>
          <GroupBody $pl={12}>
            <BigButton w={51} icon={<InsertIcon />} label="插入" />
            <BigButton w={51} icon={<DeleteIcon />} label="删除" />
            <BigButton w={54} icon={<FormatIcon />} label="格式" />
          </GroupBody>
          <GroupLabel>单元格</GroupLabel>
        </Group>

        <Group $w={297}>
          <GroupBody $pl={16}>
            <Small $w={110}>
              <SmallRow><Cell $w={17}><Sigma /></Cell><SmallLabel $ml={6} $mr={15}>自动求和</SmallLabel><Chev /></SmallRow>
              <SmallRow><Cell $w={17}><FillDown /></Cell><SmallLabel $ml={6} $mr={8}>填充</SmallLabel><Chev /></SmallRow>
              <SmallRow><Cell $w={17}><Eraser /></Cell><SmallLabel $ml={6} $mr={8}>清除</SmallLabel><Chev /></SmallRow>
            </Small>
            <BigButton w={81} icon={<SortIcon />} label="排序和筛选" />
            <BigButton w={81} icon={<FindIcon />} label="查找和选择" />
          </GroupBody>
          <GroupLabel>编辑</GroupLabel>
        </Group>

        <Group $w={86}>
          <GroupBody>
            <Big $w={85}>
              <BigIcon><CloudIcon /></BigIcon>
              <BigLine>保存到</BigLine>
              <BigLine>百度网盘</BigLine>
            </Big>
          </GroupBody>
          <GroupLabel>保存</GroupLabel>
        </Group>

        <RibbonEnd>
          <svg width="14" height="8" viewBox="0 0 14 8"><path d="M1 7l6-6 6 6" fill="none" stroke="#666" /></svg>
        </RibbonEnd>
      </Ribbon>

      <FormulaBar>
        <NameBox>E1<Caret /></NameBox>
        <Dots />
        <FxBox>
          <Cell $w={16} $ml={14}>
            <svg width="16" height="16" viewBox="0 0 16 16"><path d="M2 2l12 12M14 2L2 14" stroke="#c4c4c4" strokeWidth="2" /></svg>
          </Cell>
          <Cell $w={18} $ml={28}>
            <svg width="18" height="16" viewBox="0 0 18 16"><path d="M2 9l5 6 9-14" fill="none" stroke="#c4c4c4" strokeWidth="2" /></svg>
          </Cell>
          <Cell $w={18} $ml={26}><Glyph $size={21} $italic $serif>fx</Glyph></Cell>
        </FxBox>
        <FormulaInput>
          增长率
          <svg width="11" height="8" viewBox="0 0 11 8"><path d="M1 1l4.500 5L10 1" fill="none" stroke="#666" strokeWidth="1.500" /></svg>
        </FormulaInput>
      </FormulaBar>

      <GridArea>
        <Sheet>
          <Table>
            <Corner>
              <svg width="16" height="16" viewBox="0 0 16 16"><polygon points="16,0 16,16 0,16" fill="#b6b6b6" /></svg>
            </Corner>
            {colNames.map((c) => <ColHead key={c} $sel={c === "E"}>{c}</ColHead>)}
            {Array.from({ length: 31 }, (_, r) => (
              <React.Fragment key={r}>
                <RowHead>{r + 1}</RowHead>
                {colNames.map((c, i) => (
                  <DataCell key={c} $sel={i === 4 && r > 0} $cjk={r === 0 || i === 2}>
                    {rowsData[r] ? rowsData[r][i] : ""}
                  </DataCell>
                ))}
              </React.Fragment>
            ))}
          </Table>
          <Selection />
        </Sheet>
        <VScroll>
          <ScrollBtn>
            <svg width="9" height="6" viewBox="0 0 9 6"><polygon points="4.500,0 9,6 0,6" fill="#777" /></svg>
          </ScrollBtn>
          <Thumb />
          <Track />
          <ScrollBtn>
            <svg width="9" height="6" viewBox="0 0 9 6"><polygon points="0,0 9,0 4.500,6" fill="#777" /></svg>
          </ScrollBtn>
        </VScroll>
      </GridArea>

      <SheetBar>
        <NavArrows>
          <BlockArrow points="6,0 6,10 0,5" />
          <BlockArrow points="0,0 0,10 6,5" />
        </NavArrows>
        {sheets.map((s, i) => (
          <SheetTab key={s} $active={s === "Sheet12"} $noline={sheets[i - 1] === "Sheet12"}>{s}</SheetTab>
        ))}
        <TabsEnd />
        <AddSheet>
          <svg width="11" height="11" viewBox="0 0 11 11"><path d="M5.500 0v11M0 5.500h11" stroke="#777" /></svg>
        </AddSheet>
        <BarDots />
        <HScroll>
          <ScrollBtn $wide>
            <svg width="6" height="10" viewBox="0 0 6 10"><polygon points="6,0 6,10 0,5" fill="#666" /></svg>
          </ScrollBtn>
          <HThumb />
          <HGap />
          <ScrollBtn $wide>
            <svg width="6" height="10" viewBox="0 0 6 10"><polygon points="0,0 0,10 6,5" fill="#666" /></svg>
          </ScrollBtn>
        </HScroll>
      </SheetBar>

      <StatusBar>
        就绪
        <Cell $w={16} $ml={25}>
          <svg width="15" height="18" viewBox="0 0 15 18">
            <circle cx="4" cy="4" r="4" fill="#666" />
            <path d="M2 6h12v11H2z" fill="#fff" stroke="#666" />
            <path d="M4 9h8M4 11.500h8M4 14h8" stroke="#666" strokeDasharray="1.500 1" />
          </svg>
        </Cell>
        <Cell $w={20} $ml={23}>
          <svg width="20" height="18" viewBox="0 0 20 18">
            <path d="M9 1a7 7 0 0 0-6 12" fill="none" stroke="#666" strokeDasharray="2 1" />
            <path d="M6 5h8M10 5v5M7 16l3-6 3 6" fill="none" stroke="#444" strokeWidth="1.300" />
            <path d="M13 11l6 6M19 11l-6 6" stroke="#333" strokeWidth="1.400" />
          </svg>
        </Cell>
        <Stat $ml={3}>辅助功能: 调查</Stat>
        <StatusGap />
        <Figure $ml={0}>平均值: -0.003955556</Figure>
        <Figure $ml={20}>计数: 10</Figure>
        <Figure $ml={21}>求和: -0.0356</Figure>
        <Cell $w={0} $ml={24} />
        <ViewBtn $w={50} $on>
          <svg width="16" height="16" viewBox="0 0 16 16"><path d="M.5.500h15v15H.5zM5.500 1v14M10.500 1v14M1 5.500h14M1 10.500h14" fill="none" stroke="#666" /></svg>
        </ViewBtn>
        <ViewBtn $w={50}>
          <svg width="15" height="17" viewBox="0 0 15 17"><path d="M.5.500h14v16H.5zM4 5h7M4 8h7M4 11h7" fill="none" stroke="#666" /></svg>
        </ViewBtn>
        <ViewBtn $w={50}>
          <svg width="17" height="18" viewBox="0 0 17 18"><path d="M.5.500h16v17H.5zM1 11.500h15M6 1v10M11 1v10" fill="none" stroke="#666" /></svg>
        </ViewBtn>
        <Cell $w={10} $ml={7}>
          <svg width="9" height="2" viewBox="0 0 9 2"><path d="M0 1h9" stroke="#555" /></svg>
        </Cell>
        <Zoom />
        <Cell $w={11} $ml={5}>
          <svg width="11" height="11" viewBox="0 0 11 11"><path d="M5.500 0v11M0 5.500h11" stroke="#555" /></svg>
        </Cell>
        <Figure $ml={17}>100%</Figure>
      </StatusBar>
      <Strip>
        <StripPart $w={590} $c="#cfe2e7" />
        <StripPart $w={200} $c="#dfecef" />
        <StripPart $w={202} $c="#e8f2f4" />
        <StripPart $c="#cfe2e7" />
      </Strip>

      <Menu $x={1025} $y={172} $w={247}>
        {mainItems.map((m, i) => (
          <React.Fragment key={m[0]}>
            <MenuItem $hi={i === 0}>
              <MenuIconSlot>{menuIcons[i]}</MenuIconSlot>
              <MenuText><Hot parts={m} /></MenuText>
              <SubCaret />
            </MenuItem>
            {i === 1 && <MenuSep $m="0 0 3px 55px" />}
          </React.Fragment>
        ))}
        <MenuSep $m="-2px 0 0" />
        <CompactItem>
          <CompactSlot><MiniGrid /></CompactSlot>
          <MenuText>新建规则(<u>N</u>)...</MenuText>
        </CompactItem>
        <CompactItem>
          <CompactSlot>
            <MiniGrid extra={<path d="M11 18l6-6 4 3-6 6h-3z" fill="#ea8d9c" />} />
          </CompactSlot>
          <MenuText>清除规则(<u>C</u>)</MenuText>
          <SubCaret />
        </CompactItem>
        <CompactItem>
          <CompactSlot><MiniGrid double /></CompactSlot>
          <MenuText>管理规则(<u>R</u>)...</MenuText>
        </CompactItem>
      </Menu>

      <Menu $x={1272} $y={174} $w={182}>
        {subItems.map((m, i) => (
          <MenuItem key={m[0]} $hi={i === 0}>
            <MenuIconSlot>{subIcons[i]}</MenuIconSlot>
            <MenuText><Hot parts={m} /></MenuText>
          </MenuItem>
        ))}
        <MenuSep />
        <CenterItem>其他规则(<u>M</u>)...</CenterItem>
      </Menu>

      <Watermark>
        <svg width="350" height="120" viewBox="0 0 350 120">
          {[[160, 22, 13, 19], [185, 23, 13, 19], [139, 45, 13, 19], [212, 45, 13, 19]].map(([cx, cy, rx, ry]) => (
            <ellipse key={cx} cx={cx} cy={cy} rx={rx} ry={ry} fill="rgba(255,255,255,.55)" stroke="rgba(190,190,190,.8)" strokeWidth="1.500" />
          ))}
          <path
            d="M167 42c14 0 20 14 30 24 12 12 10 40-8 44-14 3-30-3-44 0-18 3-26-26-14-40 12-12 18-28 36-28z"
            fill="rgba(255,255,255,.55)"
            stroke="rgba(190,190,190,.8)"
            strokeWidth="1.500"
          />
        </svg>
        <MarkText $x={3} $y={47} $size={78}>Bai</MarkText>
        <MarkText $x={133} $y={64} $size={44}>du</MarkText>
        <MarkText $x={228} $y={55} $size={58}>经验</MarkText>
        <MarkText $x={4} $y={122} $size={45} $weight={400}>jingyan.baidu.com</MarkText>
      </Watermark>

      <Arrows width="1920" height="1039" viewBox="0 0 1920 1039">
        {pointers.map(([from, to]) => (
          <polygon key={from[0]} points={arrowPoints(from, to)} fill="#f4392f" />
        ))}
      </Arrows>
      <Note $x={655} $y={540}>1 选中数据区域</Note>
      <Note $x={908} $y={330}>2</Note>
      <Note $x={976} $y={357}>3</Note>
      <Note $x={1562} $y={304}>4</Note>
    </Page>
  );
}
